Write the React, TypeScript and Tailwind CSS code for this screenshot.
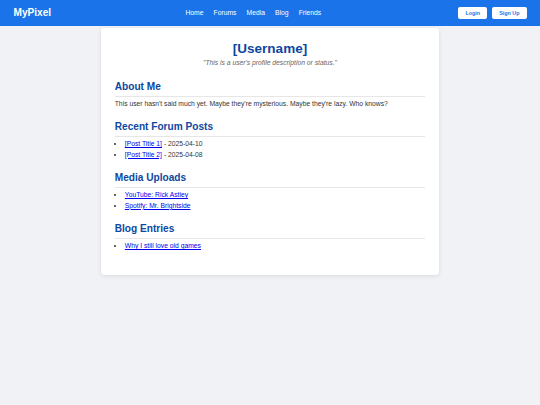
export default function App() {
  const font = { fontFamily: '"Liberation Sans", Arial, Helvetica, sans-serif' };
  const Section = ({ title, children }: { title: string; children: React.ReactNode }) => (
    <section className="mb-[13.5px] last:mb-[12.5px]">
      <h2 className="text-[10.125px] leading-[11.6px] font-bold text-[#0d47a1] pb-[3.4px] border-b border-[#e6e6e6]">{title}</h2>
      {children}
    </section>
  );
  const linkCls = "text-[#0000ee] underline";
  const ulCls = "list-disc pl-[10.1px] flex flex-col gap-[2.9px] mt-[3.1px]";
  return (
    <div style={font} className="min-h-[405px] bg-[#f0f2f5] text-[#333] text-[6.75px] leading-[7.8px]">
      <header className="h-[26px] bg-[#1a73e8] flex items-center justify-between px-[13.5px]">
        <div className="text-white font-bold text-[10.125px] leading-[11.6px]">MyPixel</div>
        <nav className="flex gap-[10.1px] text-white text-[6.75px] -ml-[3px]">
          <span>Home</span>
          <span>Forums</span>
          <span>Media</span>
          <span>Blog</span>
          <span>Friends</span>
        </nav>
        <div className="flex gap-[5px]">
          <button className="bg-white text-[#1a73e8] font-bold text-[5.4px] leading-[6.2px] px-[7px] py-[3.4px] rounded-[2px]">Login</button>
          <button className="bg-white text-[#1a73e8] font-bold text-[5.4px] leading-[6.2px] px-[7px] py-[3.4px] rounded-[2px]">Sign Up</button>
        </div>
      </header>
      <main className="w-[337.5px] mx-auto mt-[1.5px] bg-white rounded-[3.4px] shadow-[0_1px_4px_rgba(0,0,0,0.1)] px-[13.5px] pt-[13.5px] pb-[13px]">
        <h1 className="text-center text-[13.5px] leading-[15.5px] font-bold text-[#0d47a1]">[Username]</h1>
        <p className="text-center italic text-[#666] mt-[2px] mb-[14.5px]">"This is a user's profile description or status."</p>
        <Section title="About Me">
          <p className="mt-[2.8px]">This user hasn't said much yet. Maybe they're mysterious. Maybe they're lazy. Who knows?</p>
        </Section>
        <Section title="Recent Forum Posts">
          <ul className={ulCls}>
            <li><a className={linkCls} href="#">[Post Title 1]</a> - 2025-04-10</li>
            <li><a className={linkCls} href="#">[Post Title 2]</a> - 2025-04-08</li>
          </ul>
        </Section>
        <Section title="Media Uploads">
          <ul className={ulCls}>
            <li><a className={linkCls} href="#">YouTube: Rick Astley</a></li>
            <li><a className={linkCls} href="#">Spotify: Mr. Brightside</a></li>
          </ul>
        </Section>
        <Section title="Blog Entries">
          <ul className={ulCls}>
            <li><a className={linkCls} href="#">Why I still love old games</a></li>
          </ul>
        </Section>
      </main>
    </div>
  );
}
